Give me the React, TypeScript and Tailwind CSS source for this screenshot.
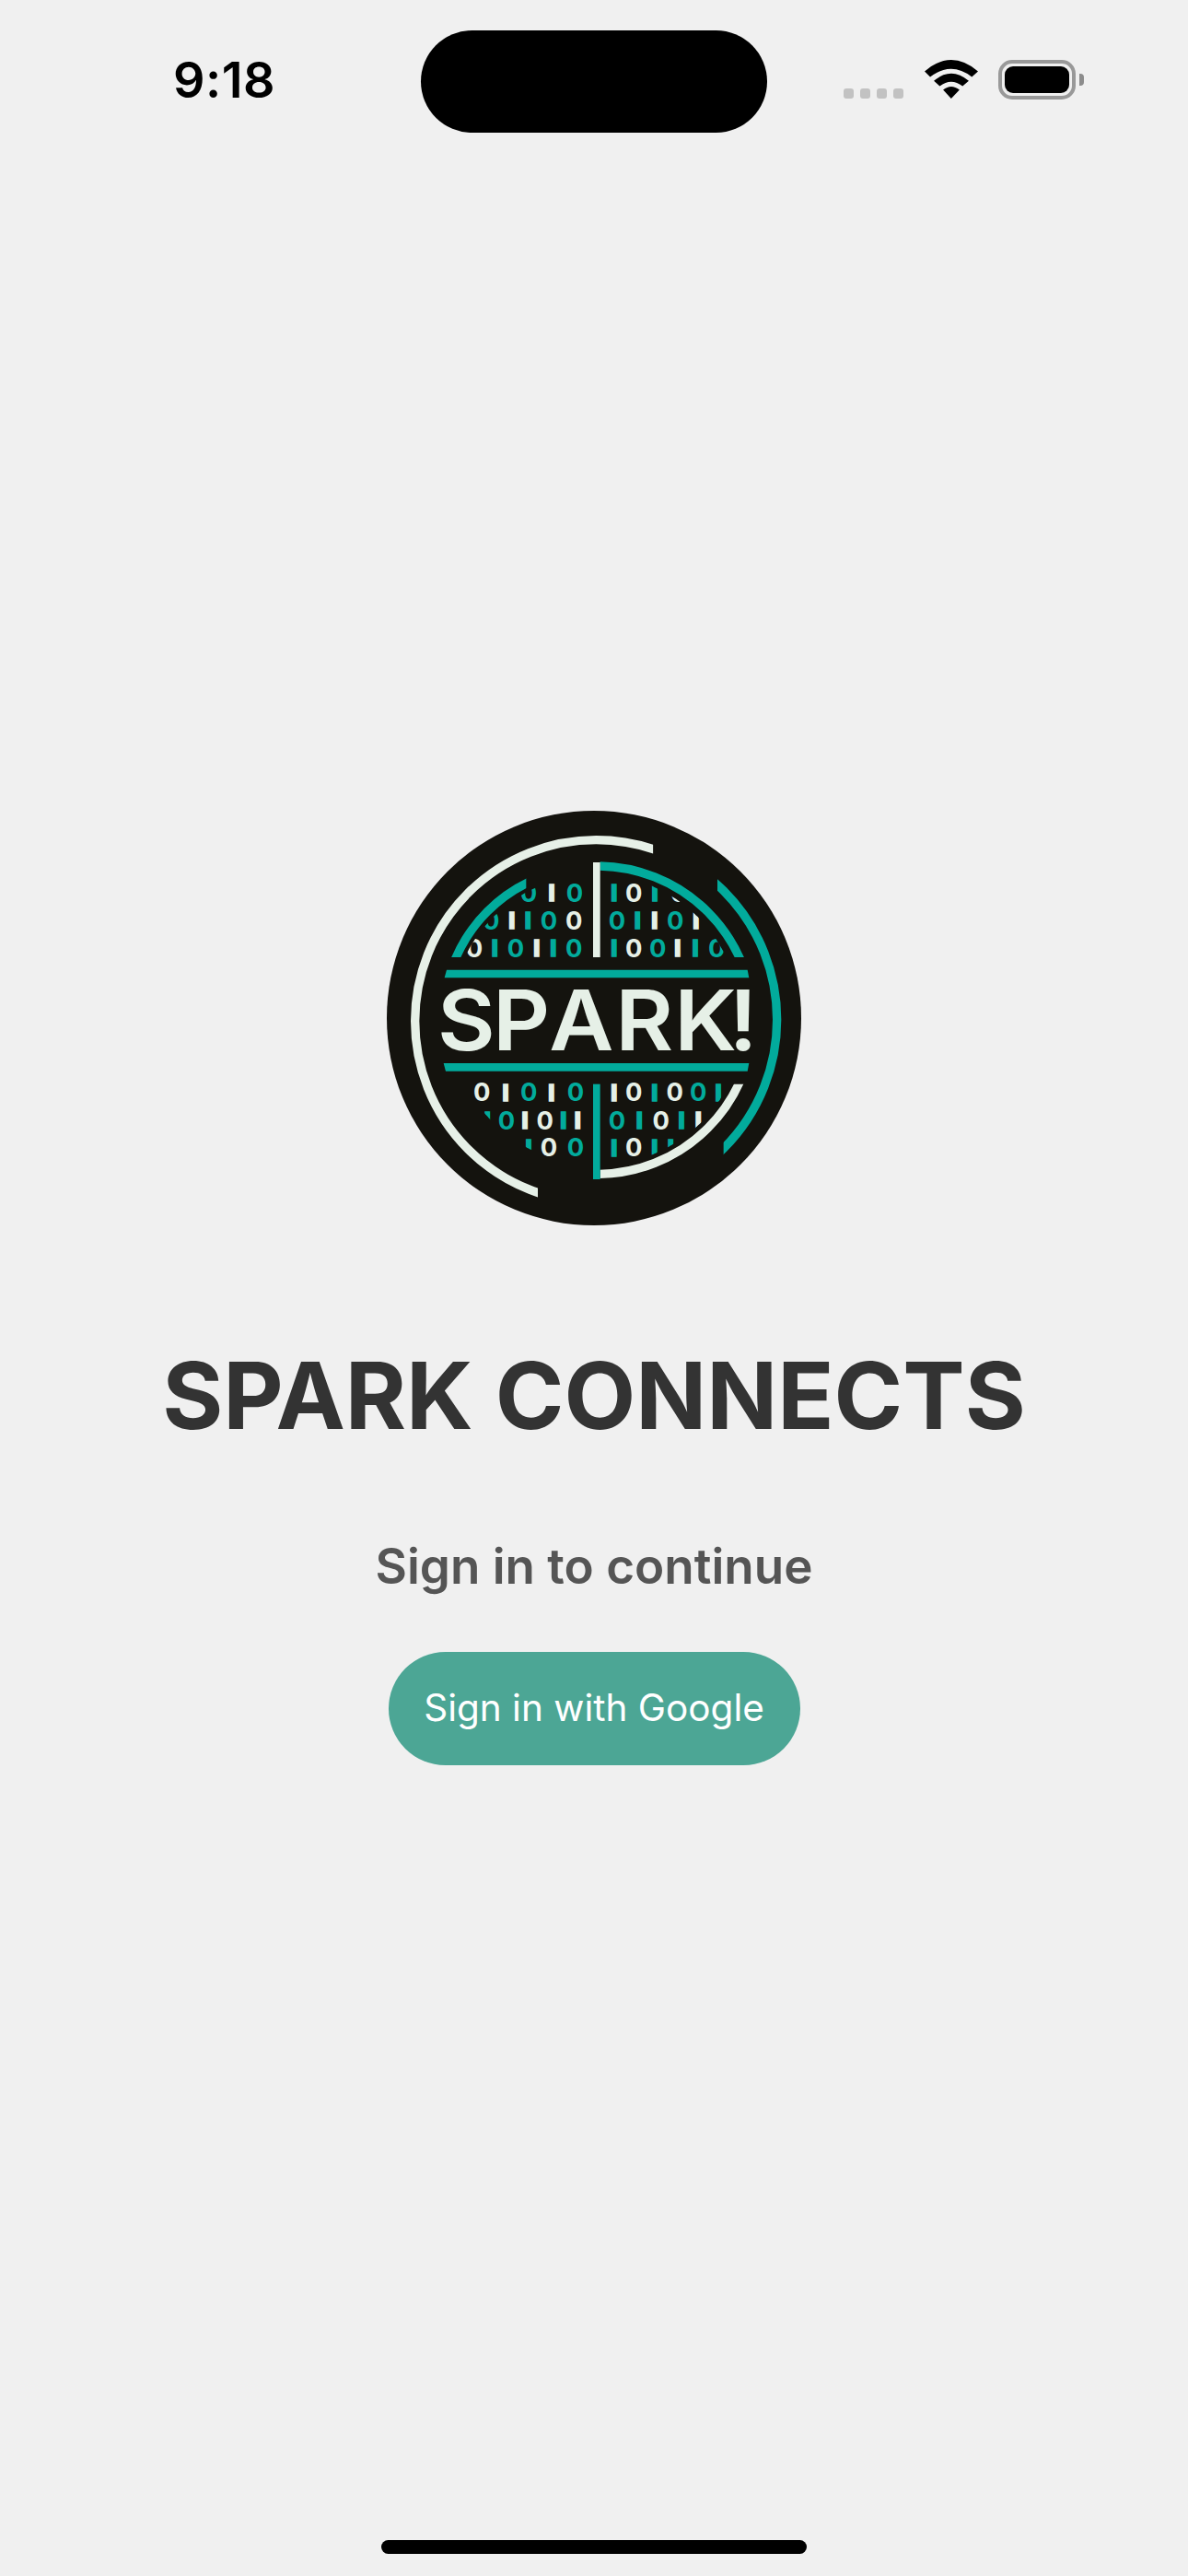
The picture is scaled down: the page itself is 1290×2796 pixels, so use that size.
const TEAL = '#02ab9c'
const PALE = '#e6f0e7'

type Digit = [number, string, 'w' | 't']

// Binary rows in the logo: baseline y, then [centre x, glyph, colour]
const UPPER_ROWS: { y: number; digits: Digit[] }[] = [
	{
		y: 356,
		digits: [
			[522, '0', 't'], [597, 'I', 'w'], [672, '0', 't'], [800, 'I', 't'], [865, '0', 'w'], [933, 'I', 't'], [1012, '0', 'w'],
		],
	},
	{
		y: 446,
		digits: [
			[400, '0', 't'], [467, 'I', 'w'], [520, 'I', 't'], [588, '0', 't'], [670, '0', 'w'], [810, '0', 't'], [877, 'I', 't'], [932, 'I', 'w'], [1000, '0', 't'], [1067, 'I', 'w'],
		],
	},
	{
		y: 536,
		digits: [
			[345, '0', 'w'], [412, 'I', 't'], [480, '0', 't'], [548, 'I', 'w'], [602, 'I', 't'], [670, '0', 't'], [800, 'I', 't'], [865, '0', 'w'], [943, '0', 't'], [1007, 'I', 'w'], [1065, 'I', 't'], [1135, '0', 't'],
		],
	},
]

const LOWER_ROWS: { y: number; digits: Digit[] }[] = [
	{
		y: 1006,
		digits: [
			[370, '0', 'w'], [447, 'I', 'w'], [523, '0', 't'], [596, 'I', 'w'], [675, '0', 't'], [800, 'I', 'w'], [865, '0', 'w'], [932, 'I', 't'], [998, '0', 'w'], [1075, '0', 't'], [1140, 'I', 't'],
		],
	},
	{
		y: 1098,
		digits: [
			[388, 'I', 't'], [450, '0', 't'], [510, 'I', 'w'], [575, '0', 'w'], [635, 'I', 't'], [682, 'I', 'w'], [810, '0', 't'], [883, 'I', 't'], [953, '0', 'w'], [1020, 'I', 't'], [1075, 'I', 'w'],
		],
	},
	{
		y: 1186,
		digits: [
			[522, 'I', 't'], [588, '0', 'w'], [675, '0', 't'], [800, 'I', 't'], [865, '0', 'w'], [932, 'I', 't'], [985, 'I', 't'],
		],
	},
]

const BinaryRows = ({ rows }: { rows: { y: number; digits: Digit[] }[] }) => (
	<>
		{rows.map((row) =>
			row.digits.map(([x, glyph, tone]) => {
				const color = tone === 'w' ? PALE : TEAL
				// the logo's ones are plain thick bars
				return glyph === 'I' ? (
					<text key={`${row.y}-${x}`} x={x} y={row.y - 2} fontSize="74" fontWeight="800" fill={color} stroke={color} strokeWidth="5">
						{glyph}
					</text>
				) : (
					<text key={`${row.y}-${x}`} x={x} y={row.y} fontSize="82" fontWeight="700" fill={color}>
						{glyph}
					</text>
				)
			}),
		)}
	</>
)

const SparkLogo = () => (
	<svg viewBox="60 60 1350 1350" className="block h-[450px] w-[450px]">
		<defs>
			<clipPath id="outer-pale">
				<polygon points="0,0 928,0 928,735 552,735 552,1470 0,1470" />
			</clipPath>
			<clipPath id="outer-teal">
				<polygon points="1137,0 1470,0 1470,1470 1157,1470 1157,735 1137,735" />
			</clipPath>
			<clipPath id="arc-upper-left">
				<rect x="0" y="0" width="514" height="537" />
			</clipPath>
			<clipPath id="arc-upper-right">
				<rect x="755" y="0" width="715" height="537" />
			</clipPath>
			<clipPath id="arc-lower">
				<rect x="755" y="950" width="715" height="520" />
			</clipPath>
			<clipPath id="digits-upper">
				<circle cx="740" cy="740" r="472" />
			</clipPath>
			<clipPath id="digits-lower">
				<circle cx="745" cy="735" r="480" />
			</clipPath>
		</defs>

		<circle cx="735" cy="735" r="675" fill="#14130e" />

		<g textAnchor="middle" className="font-['Inter',sans-serif]">
			<g clipPath="url(#digits-upper)">
				<BinaryRows rows={UPPER_ROWS} />
			</g>
			<g clipPath="url(#digits-lower)">
				<BinaryRows rows={LOWER_ROWS} />
			</g>
		</g>

		{/* Rings and arcs, cut flat at their ends */}
		<g fill="none" strokeWidth="28">
			<circle cx="742" cy="745" r="590" stroke={PALE} clipPath="url(#outer-pale)" />
			<circle cx="738" cy="740" r="593" stroke={TEAL} clipPath="url(#outer-teal)" />
			<circle cx="735" cy="735" r="491" stroke={TEAL} clipPath="url(#arc-upper-left)" />
			<circle cx="745" cy="750" r="510" stroke={TEAL} clipPath="url(#arc-upper-right)" />
			<circle cx="745" cy="733" r="510" stroke={PALE} clipPath="url(#arc-lower)" />
		</g>

		<rect x="732" y="228" width="23" height="309" fill={PALE} />
		<rect x="732" y="950" width="23" height="310" fill={TEAL} />
		<polygon points="255,578 1235,578 1240,604 248,604" fill={TEAL} />
		<polygon points="245,882 1240,882 1235,908 252,908" fill={TEAL} />

		<g transform="scale(1.064 1)">
			<text
				x="211.5 380.6 553.6 756.6 937 1104"
				y="840"
				fontSize="272"
				fontWeight="600"
				fill={PALE}
				className="font-['Inter',sans-serif]"
			>
				SPARK!
			</text>
		</g>
	</svg>
)

const StatusIcons = () => (
	<div className="flex pl-[83px] pt-[65px]">
		{/* Signal placeholder dots */}
		<div className="mt-[31px] flex h-[11px] gap-[7px]">
			<span className="h-[11px] w-[11px] rounded-[3px] bg-[#c2c2c2]" />
			<span className="h-[11px] w-[11px] rounded-[3px] bg-[#c2c2c2]" />
			<span className="h-[11px] w-[11px] rounded-[3px] bg-[#c2c2c2]" />
			<span className="h-[11px] w-[11px] rounded-[3px] bg-[#c2c2c2]" />
		</div>

		<svg viewBox="372 75 173 125" className="ml-[23px] h-[42px] w-[58px]">
			<path d="M372 112 Q458 38 545 112 L525 130 Q458 78 390 130 Z" />
			<path d="M402 143 Q458 95 515 143 L495 160 Q458 132 421 160 Z" />
			<path d="M432 172 Q458 150 485 172 L458 200 Z" />
		</svg>

		<div className="ml-[22px] flex h-[43px] items-center">
			<div className="h-[43px] w-[84px] rounded-[15px] border-[4px] border-[#999999] p-[3px]">
				<div className="h-full w-full rounded-[9px] bg-black" />
			</div>
			<div className="ml-[4px] h-[13px] w-[5px] rounded-r-[4px] bg-[#8c8c8c]" />
		</div>
	</div>
)

export default function App() {
	return (
		<div className="flex h-[2796px] w-[1290px] flex-col items-center bg-[#f0f0f0] font-['Inter',sans-serif]">
			{/* Status bar */}
			<div className="grid w-full grid-cols-[457px_376px_1fr]">
				<div className="pl-[188px] pt-[54px] text-[54px] font-semibold leading-[66px] tracking-[0.5px] text-black">
					9:18
				</div>
				<div className="mt-[33px] h-[111px] rounded-[56px] bg-black" />
				<StatusIcons />
			</div>

			<div className="mt-[736px]">
				<SparkLogo />
			</div>

			<h1 className="mt-[126px] text-[101px] font-bold leading-[116px] text-[#333333]">SPARK CONNECTS</h1>

			<p className="mt-[95px] text-[53px] font-semibold leading-[66px] text-[#555555]">Sign in to continue</p>

			<button className="mt-[60px] flex h-[123px] w-[447px] items-center justify-center rounded-full bg-[#4ca695] text-[40.5px] font-normal text-white">
				Sign in with Google
			</button>

			{/* Home indicator */}
			<div className="mb-[24px] mt-auto h-[15px] w-[462px] rounded-full bg-black" />
		</div>
	)
}
